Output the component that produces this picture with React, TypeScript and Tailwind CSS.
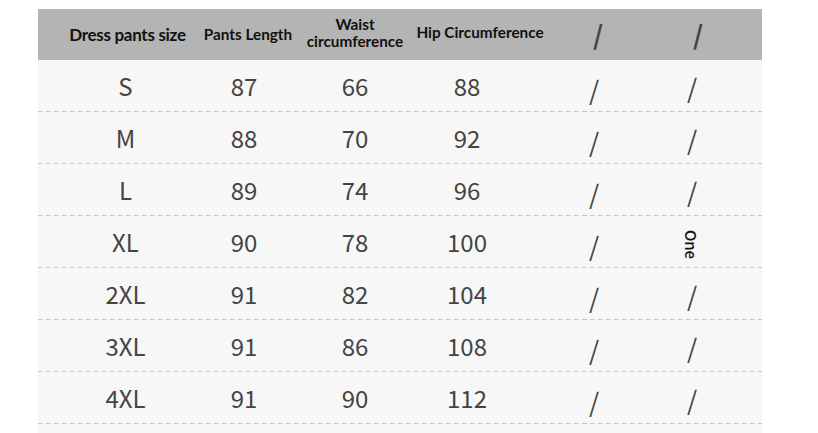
import React from 'react';

const rows = [
  ['S', '87', '66', '88'],
  ['M', '88', '70', '92'],
  ['L', '89', '74', '96'],
  ['XL', '90', '78', '100'],
  ['2XL', '91', '82', '104'],
  ['3XL', '91', '86', '108'],
  ['4XL', '91', '90', '112'],
];

const bodyFont = { fontFamily: '"Noto Sans CJK SC", "Noto Sans", sans-serif' };
const headFont = { fontFamily: 'Lato, "Noto Sans", sans-serif' };

const Slash = ({ className = '' }: { className?: string }) => (
  <span className={`text-[26px] leading-none text-[#444] ${className}`} style={bodyFont}>
    /
  </span>
);

export default function App() {
  return (
    <div className="w-[818px] h-[433px] bg-white pt-[9px] pl-[38px] overflow-hidden">
      <div className="w-[724px] bg-[#f7f7f7]">
        {/* header */}
        <div
          className="flex h-[51px] items-center bg-[#b4b4b4] font-bold text-[#111] pr-[39px]"
          style={headFont}
        >
          <div className="w-[147px] pl-[32px] flex justify-center whitespace-nowrap text-[17px] tracking-[-0.3px]">
            Dress pants size
          </div>
          <div className="w-[118px] pl-[8px] flex justify-center whitespace-nowrap text-[15.3px]">Pants Length</div>
          <div className="w-[104px] flex flex-col items-center text-[15.3px] leading-[17px] pb-[3px]">
            <span>Waist</span>
            <span className="whitespace-nowrap">circumference</span>
          </div>
          <div className="w-[120px] pl-[26px] flex justify-center whitespace-nowrap text-[15.3px] pb-[4px]">
            Hip Circumference
          </div>
          <div className="w-[134px] pl-[8px] flex justify-center pb-[2px]">
            <Slash className="text-[#333]" />
          </div>
          <div className="w-[62px] pl-[12px] flex justify-center pb-[2px]">
            <Slash className="text-[#333]" />
          </div>
        </div>

        {/* body */}
        <div className="pb-[9px]">
          {rows.map((r, i) => (
            <div key={r[0]} className="flex flex-col">
              <div
                className="flex h-[51px] items-center text-[24px] text-[#444] pr-[39px]"
                style={bodyFont}
              >
                <div className="w-[147px] pl-[28px] flex justify-center">{r[0]}</div>
                <div className="w-[118px] flex justify-center">{r[1]}</div>
                <div className="w-[104px] flex justify-center">{r[2]}</div>
                <div className="w-[120px] flex justify-center">{r[3]}</div>
                <div className="w-[134px] flex justify-center pt-[6px]">
                  <Slash />
                </div>
                <div className="w-[62px] flex justify-center pt-[2px]">
                  {i === 3 ? (
                    <span
                      className="inline-block rotate-90 text-[15px] font-medium text-[#111] leading-none pl-[4px]"
                      style={bodyFont}
                    >
                      One
                    </span>
                  ) : (
                    <Slash />
                  )}
                </div>
              </div>
              <div className="h-px bg-[repeating-linear-gradient(to_right,#c6c6c6_0_5px,transparent_5px_8px)]" />
            </div>
          ))}
        </div>
      </div>
    </div>
  );
}
